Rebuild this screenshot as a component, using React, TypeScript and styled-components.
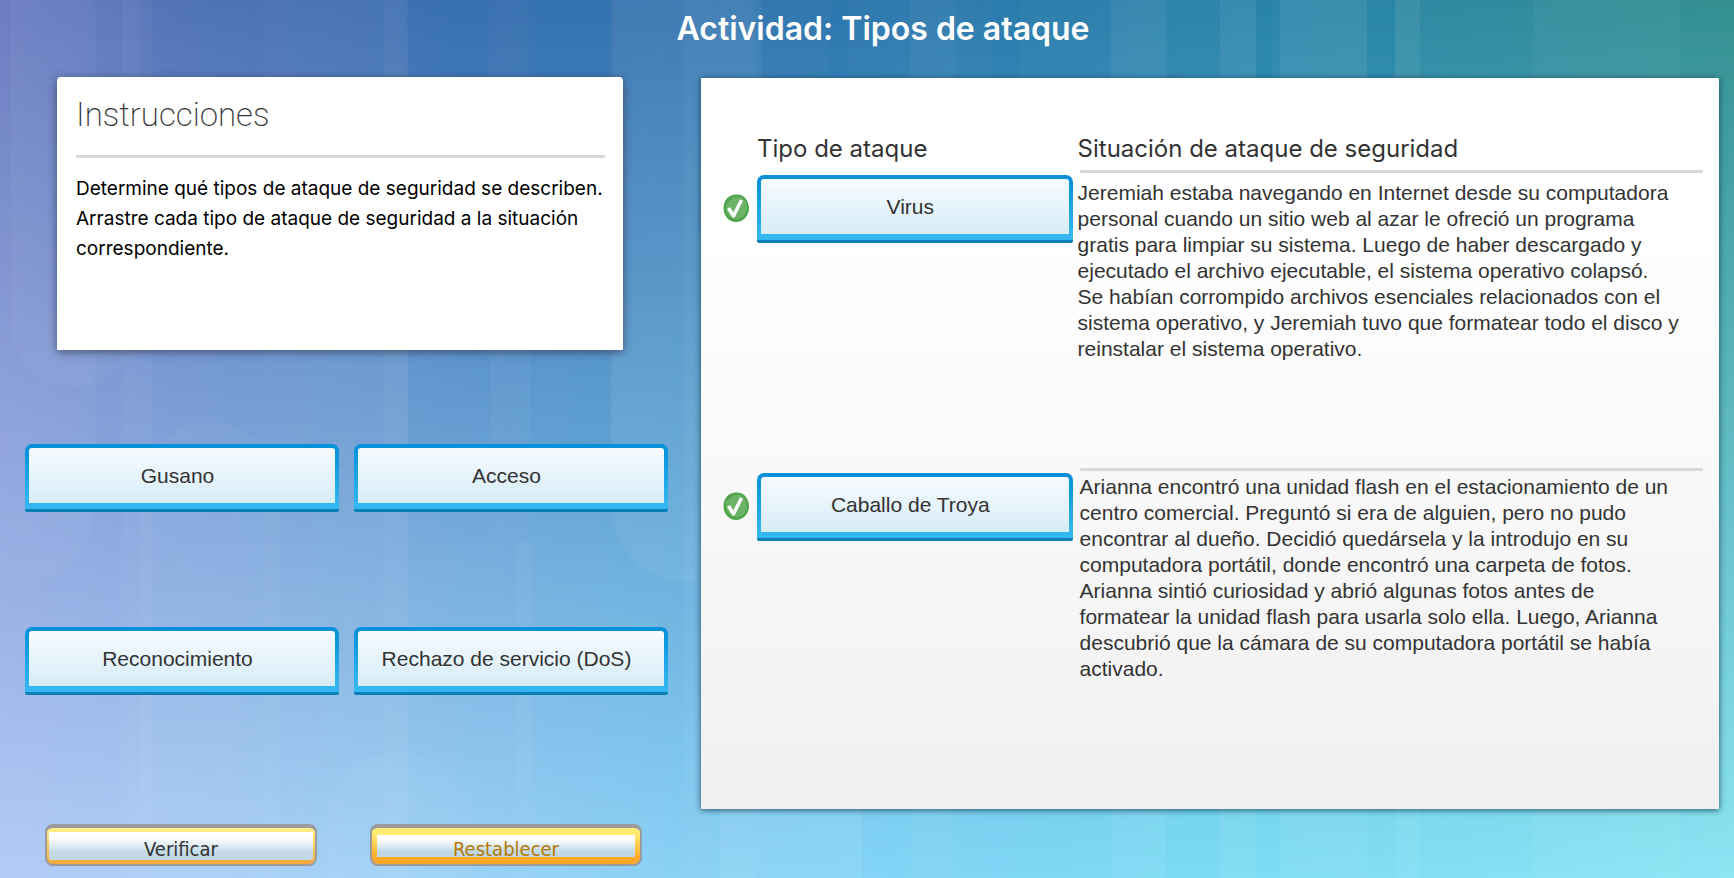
import React from 'react';
import styled, { createGlobalStyle } from 'styled-components';

const GlobalStyle = createGlobalStyle`
  *, *::before, *::after { box-sizing: border-box; }
  body {
    margin: 0;
    font-family: "Liberation Sans", Arial, sans-serif;
    font-size: 21px;
    line-height: 26px;
    color: #333;
  }
`;

const Page = styled.div`
  position: relative;
  isolation: isolate;
  min-height: 100vh;
  overflow: hidden;
`;

const BackdropArt = styled.svg`
  position: absolute;
  inset: 0;
  z-index: -1;
  width: 100%;
  height: 100%;
`;

const Title = styled.h1`
  margin: 0;
  padding: 9px 0 28px 32px;
  font: 600 32px/40px Inter, sans-serif;
  text-align: center;
  color: #fff;
`;

const Main = styled.main`
  display: grid;
  grid-template-columns: minmax(0, 643fr) minmax(0, 1018fr);
  gap: 33px;
  align-items: start;
  padding: 0 15px 0 25px;
`;

const LeftColumn = styled.div`
  display: flex;
  flex-direction: column;
`;

const Instructions = styled.section`
  min-height: 273px;
  margin: 0 45px 0 32px;
  padding: 18px 2px 20px 19px;
  border-radius: 4px 4px 1px 1px;
  background: #fff;
  box-shadow: 0 2px 10px rgba(50, 55, 85, 0.75);
`;

const InstructionsTitle = styled.h2`
  margin: 0;
  font: 200 33px/40px Roboto, sans-serif;
  color: #333;
`;

const Rule = styled.hr`
  height: 3px;
  margin: 0;
  border: 0;
  border-radius: 1px;
  background: #d8d8d8;
`;

const InstructionsRule = styled(Rule)`
  margin: 20px 16px 16px 0;
`;

const InstructionsText = styled.p`
  margin: 0;
  font: 400 19px/30px Inter, sans-serif;
  color: #000;
`;

const TileGrid = styled.div`
  display: grid;
  grid-template-columns: 1fr 1fr;
  gap: 115px 15px;
  margin-top: 94px;
`;

const Tile = styled.button`
  width: 100%;
  height: 68px;
  padding: 0 9px 0 0;
  border: 4px solid transparent;
  border-bottom-width: 9px;
  border-radius: 7px 7px 2px 2px;
  background:
    linear-gradient(#f7fbff, #d6ecf7) padding-box,
    linear-gradient(#0790d8, #0c98de 20%, #34b6f0 88%, #34b6f0 95%, #0880b6 95%) border-box;
  font: inherit;
  color: #333;
  cursor: grab;
`;

const Actions = styled.div`
  display: grid;
  grid-template-columns: 1fr 1fr;
  gap: 53px;
  margin-top: 129px;
  padding: 0 26px 0 20px;
`;

const ActionButton = styled.button<{ $active?: boolean }>`
  display: flex;
  align-items: center;
  justify-content: center;
  height: 42px;
  padding: ${p => (p.$active ? '7px 5px' : '4px 2px')};
  border: 2px solid #9b9b9b;
  border-top-width: 4px;
  border-radius: 8px;
  background:
    linear-gradient(#fff 20%, #c1d9e6 75%) content-box,
    linear-gradient(${p => (p.$active ? '#ffec70 15%, #ffa726 85%' : '#fff08a, #f5a83a')}) padding-box;
  font: 20px/22px "DejaVu Sans Condensed", "DejaVu Sans", sans-serif;
  color: ${p => (p.$active ? '#b47a05' : '#333')};
  cursor: pointer;
`;

const ActionLabel = styled.span`
  padding-top: 5px;
`;

const Board = styled.section`
  min-height: 731px;
  margin-top: 1px;
  padding-top: 52px;
  border-radius: 1px;
  background: linear-gradient(#fff 20%, #f0f0f0);
  box-shadow: 0 1px 6px rgba(10, 50, 70, 0.8);
`;

const BoardTable = styled.table`
  width: 100%;
  border-collapse: collapse;
  table-layout: fixed;

  th, td { padding: 0; text-align: left; vertical-align: top; }
`;

const MarkCol = styled.col`
  width: 56px;
`;

const TypeCol = styled.col`
  width: 31%;
`;

const Heading = styled.th`
  height: 40px;
  font: 400 24px/38px Inter, sans-serif;

  &:last-child { padding-left: 5px; }
`;

const Row = styled.tr`
  height: 298px;
`;

const MarkCell = styled.td`
  && { padding: 23px 0 0 21px; }
`;

const TypeCell = styled.td`
  && { padding-top: 5px; }
`;

const SituationCell = styled.td`
  && { padding: 0 16px 0 7px; }
`;

const Situation = styled.p<{ $long?: boolean }>`
  margin: 0;
  padding-top: ${p => (p.$long ? 3 : 7)}px;
  margin-left: ${p => (p.$long ? 0 : -2)}px;
  white-space: pre-line;
`;

const Mark = styled.svg`
  display: block;
  width: 28px;
  height: 30px;
`;

const CheckMark = () => (
  <Mark viewBox="0 0 28 30" role="img" aria-label="Correcto">
    <path d="M14 1.500 C21 0.500 27 7 27 15 C27 23 21 29 14 29 C7 29 1.500 23 1.500 15 C1.500 7 7 1.500 14 1.500Z" fill="#4fa54b" />
    <path d="M12 4 L19 4 L24 9 L25 16 L22 23 L15 26.500 L8 24 L4 18 L4 11Z" fill="#6cb367" />
    <path d="M6.500 15 L11.500 23 L19.500 7" fill="none" stroke="#fff" strokeWidth="3.400" strokeLinejoin="round" />
  </Mark>
);

const Backdrop = () => (
  <BackdropArt viewBox="0 0 1734 878" preserveAspectRatio="none" aria-hidden="true">
    <defs>
      <linearGradient id="upper">
        <stop offset="0" stopColor="#6678be" />
        <stop offset=".1" stopColor="#5272b7" />
        <stop offset=".27" stopColor="#3c70b1" />
        <stop offset=".5" stopColor="#2f78ae" />
        <stop offset=".75" stopColor="#2c86a9" />
        <stop offset="1" stopColor="#348f91" />
      </linearGradient>
      <linearGradient id="lower">
        <stop offset="0" stopColor="#b4ccf8" />
        <stop offset=".2" stopColor="#a4d2f7" />
        <stop offset=".42" stopColor="#87d2f6" />
        <stop offset=".7" stopColor="#7cdbf5" />
        <stop offset="1" stopColor="#8ee5f4" />
      </linearGradient>
      <linearGradient id="fade" x2="0" y2="1">
        <stop offset="0" stopColor="#fff" />
        <stop offset="1" stopColor="#000" />
      </linearGradient>
      <linearGradient id="shade" x2="0" y2="1">
        <stop offset="0" stopColor="#0068b0" stopOpacity=".1" />
        <stop offset=".5" stopColor="#0068b0" stopOpacity=".05" />
        <stop offset=".65" stopColor="#0068b0" stopOpacity="0" />
      </linearGradient>
      <mask id="fadeDown" maskUnits="userSpaceOnUse" x="0" y="0" width="1734" height="878" style={{ maskType: 'luminance' }}>
        <rect width="1734" height="878" fill="url(#fade)" />
      </mask>
    </defs>
    <rect width="1734" height="878" fill="url(#lower)" />
    <rect width="1734" height="878" fill="url(#upper)" mask="url(#fadeDown)" />
    <g fill="#fff" fillOpacity=".035">
      <rect x="10" y="-100" width="130" height="486" rx="65" />
      <rect x="-60" y="-100" width="155" height="682" rx="76" />
      <rect x="122" width="30" height="878" />
      <rect x="140" y="422" width="140" height="600" rx="70" />
      <rect x="262" width="146" height="878" fillOpacity=".02" />
      <rect x="383" width="24" height="878" />
      <rect x="515" y="540" width="16" height="400" rx="8" />
      <rect x="612" y="-100" width="150" height="682" rx="75" fillOpacity=".05" />
      <rect x="683" width="72" height="878" />
      <rect x="325" y="752" width="150" height="300" rx="75" />
      <rect x="720" y="740" width="142" height="300" rx="71" fillOpacity=".08" />
      <rect x="910" width="46" height="878" />
      <rect x="1111" width="55" height="878" fillOpacity=".06" />
      <rect x="1220" width="36" height="878" fillOpacity=".06" />
      <rect x="1280" width="87" height="878" fillOpacity=".06" />
      <rect x="1395" width="25" height="878" fillOpacity=".06" />
      <rect x="1533" width="147" height="878" />
    </g>
    <g fill="url(#shade)">
      <rect x="408" width="82" height="878" />
      <rect x="530" width="80" height="878" />
      <rect x="830" width="17" height="878" />
      <rect x="992" width="28" height="878" />
      <rect x="1256" width="16" height="878" />
      <rect x="1367" width="28" height="878" />
    </g>
  </BackdropArt>
);

const attackTypes = ['Gusano', 'Acceso', 'Reconocimiento', 'Rechazo de servicio (DoS)'];

const matches = [
  {
    type: 'Virus',
    situation: `Jeremiah estaba navegando en Internet desde su computadora
personal cuando un sitio web al azar le ofreció un programa
gratis para limpiar su sistema. Luego de haber descargado y
ejecutado el archivo ejecutable, el sistema operativo colapsó.
Se habían corrompido archivos esenciales relacionados con el
sistema operativo, y Jeremiah tuvo que formatear todo el disco y
reinstalar el sistema operativo.`,
  },
  {
    type: 'Caballo de Troya',
    long: true,
    situation: `Arianna encontró una unidad flash en el estacionamiento de un
centro comercial. Preguntó si era de alguien, pero no pudo
encontrar al dueño. Decidió quedársela y la introdujo en su
computadora portátil, donde encontró una carpeta de fotos.
Arianna sintió curiosidad y abrió algunas fotos antes de
formatear la unidad flash para usarla solo ella. Luego, Arianna
descubrió que la cámara de su computadora portátil se había
activado.`,
  },
];

export default function App() {
  return (
    <Page>
      <GlobalStyle />
      <Backdrop />
      <Title>Actividad: Tipos de ataque</Title>
      <Main>
        <LeftColumn>
          <Instructions>
            <InstructionsTitle>Instrucciones</InstructionsTitle>
            <InstructionsRule />
            <InstructionsText>
              Determine qué tipos de ataque de seguridad se describen.<br />
              Arrastre cada tipo de ataque de seguridad a la situación<br />
              correspondiente.
            </InstructionsText>
          </Instructions>
          <TileGrid>
            {attackTypes.map(type => (
              <Tile key={type} type="button">{type}</Tile>
            ))}
          </TileGrid>
          <Actions>
            <ActionButton type="button"><ActionLabel>Verificar</ActionLabel></ActionButton>
            <ActionButton type="button" $active><ActionLabel>Restablecer</ActionLabel></ActionButton>
          </Actions>
        </LeftColumn>
        <Board>
          <BoardTable>
            <colgroup>
              <MarkCol />
              <TypeCol />
              <col />
            </colgroup>
            <thead>
              <tr>
                <td />
                <Heading scope="col">Tipo de ataque</Heading>
                <Heading scope="col">Situación de ataque de seguridad</Heading>
              </tr>
            </thead>
            <tbody>
              {matches.map(m => (
                <Row key={m.type}>
                  <MarkCell><CheckMark /></MarkCell>
                  <TypeCell><Tile type="button">{m.type}</Tile></TypeCell>
                  <SituationCell>
                    <Rule />
                    <Situation $long={m.long}>{m.situation}</Situation>
                  </SituationCell>
                </Row>
              ))}
            </tbody>
          </BoardTable>
        </Board>
      </Main>
    </Page>
  );
}
